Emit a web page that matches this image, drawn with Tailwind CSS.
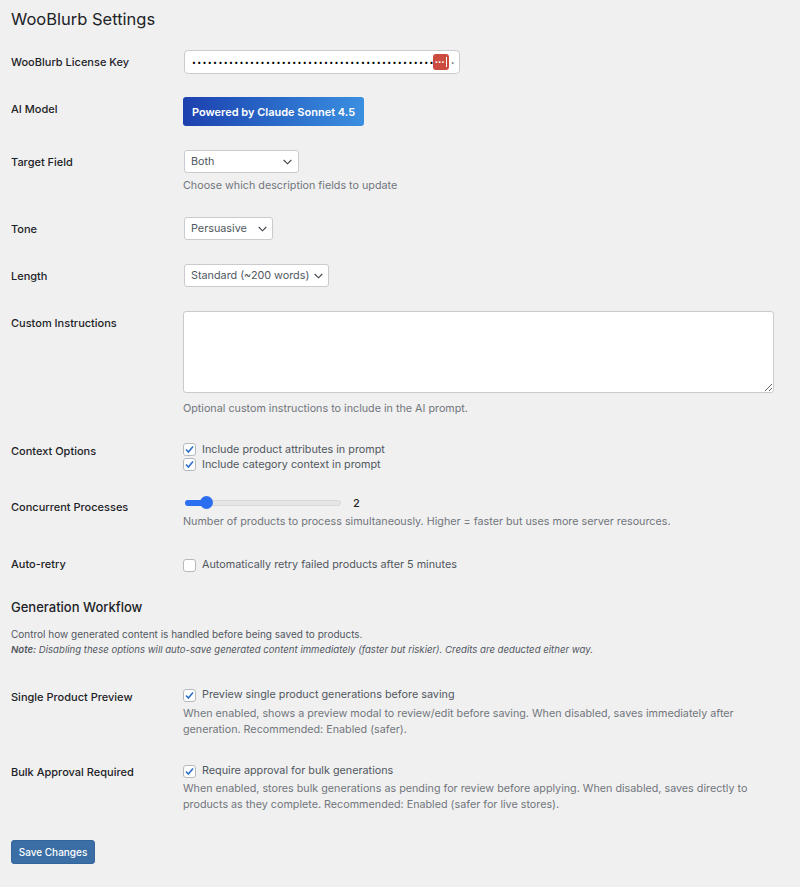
<!DOCTYPE html>
<html lang="en">
<head>
  <meta charset="UTF-8">
  <title>WooBlurb Settings</title>
  <script src="https://cdn.jsdelivr.net/npm/@tailwindcss/browser@4"></script>
</head>
<body class="bg-[#f0f0f1] font-['Inter',sans-serif] text-[#1d2327] overflow-hidden">
<div class="w-[800px] h-[887px] pl-[11px] pr-[26px] antialiased">

  <h1 class="pt-[8px] h-[50px] text-[16.5px] leading-[22px] font-normal text-[#1d2327]">WooBlurb Settings</h1>

  <!-- license -->
  <div class="flex h-[47px]">
    <label class="w-[172px] pt-[5px] text-[11px] leading-[14px] font-medium">WooBlurb License Key</label>
    <div class="relative w-[276px] h-[24px] ml-px bg-white border border-[#c9cbce] rounded-[4px] flex items-center pl-[7px]">
      <span class="text-[7px] leading-none tracking-[1.34px] text-black whitespace-nowrap">••••••••••••••••••••••••••••••••••••••••••••••</span>
      <span class="absolute left-[248px] top-[3px] w-[16px] h-[16px] rounded-[3px] bg-[#cc4b3f] text-white text-[6px] leading-[16px] font-bold pl-[2px] tracking-[0.4px]">•••</span>
      <span class="absolute left-[261px] top-[6px] w-px h-[10px] bg-white"></span>
      <span class="absolute left-[266px] top-[5px] text-[6px] leading-[14px] text-[#666]">•</span>
    </div>
  </div>

  <!-- model -->
  <div class="flex h-[53px]">
    <label class="w-[172px] pt-[5px] text-[11px] leading-[14px] font-medium">AI Model</label>
    <div class="w-[181px] h-[29px] bg-linear-to-r from-[#1e40af] to-[#3b8fe0] rounded-[3px] text-white text-[11px] leading-[30px] font-semibold text-center">Powered by Claude Sonnet 4.5</div>
  </div>

  <!-- target -->
  <div class="flex h-[67px]">
    <label class="w-[172px] pt-[5px] text-[11px] leading-[14px] font-medium">Target Field</label>
    <div class="ml-px">
      <div class="w-[115px] h-[23px] bg-white border border-[#c9cbce] rounded-[3px] flex items-center justify-between pt-px pl-[6px] pr-[6px] text-[10.8px] text-[#50575e]">
        <span>Both</span>
        <svg width="9" height="6" viewBox="0 0 9 6" fill="none" stroke="#3c434a" stroke-width="1.1"><path d="M0.7 1l3.8 3.8L8.3 1"/></svg>
      </div>
      <p class="mt-[6px] -ml-px text-[10.75px] leading-[14px] text-[#71767b]">Choose which description fields to update</p>
    </div>
  </div>

  <!-- tone -->
  <div class="flex h-[47px]">
    <label class="w-[172px] pt-[5px] text-[11px] leading-[14px] font-medium">Tone</label>
    <div class="ml-px w-[89px] h-[23px] bg-white border border-[#c9cbce] rounded-[3px] flex items-center justify-between pt-px pl-[6px] pr-[5px] text-[10.8px] text-[#50575e]">
      <span>Persuasive</span>
      <svg width="9" height="6" viewBox="0 0 9 6" fill="none" stroke="#3c434a" stroke-width="1.1"><path d="M0.7 1l3.8 3.8L8.3 1"/></svg>
    </div>
  </div>

  <!-- length -->
  <div class="flex h-[47px]">
    <label class="w-[172px] pt-[5px] text-[11px] leading-[14px] font-medium">Length</label>
    <div class="ml-px w-[145px] h-[23px] bg-white border border-[#c9cbce] rounded-[3px] flex items-center justify-between pt-px pl-[6px] pr-[5px] text-[10.8px] text-[#50575e]">
      <span class="whitespace-nowrap">Standard (~200 words)</span>
      <svg width="9" height="6" viewBox="0 0 9 6" fill="none" stroke="#3c434a" stroke-width="1.1"><path d="M0.7 1l3.8 3.8L8.3 1"/></svg>
    </div>
  </div>

  <!-- custom -->
  <div class="flex h-[127px]">
    <label class="w-[172px] pt-[5px] text-[11px] leading-[14px] font-medium">Custom Instructions</label>
    <div>
      <textarea class="block w-[591px] h-[82px] bg-white border border-[#c9cbce] rounded-[3px]"></textarea>
      <p class="mt-[9px] text-[10.75px] leading-[14px] text-[#71767b]">Optional custom instructions to include in the AI prompt.</p>
    </div>
  </div>

  <!-- context -->
  <div class="flex h-[54px]">
    <label class="w-[172px] pt-[6px] text-[11px] leading-[14px] font-medium">Context Options</label>
    <div class="pt-[4px] text-[10.8px] leading-[15px] text-[#50575e]">
      <div class="flex items-center h-[15px]">
        <span class="w-[13px] h-[13px] bg-white border border-[#b4b9be] rounded-[3px] flex items-center justify-center mr-[6px]"><svg width="11" height="11" viewBox="0 0 11 11" fill="none" stroke="#2f6fc9" stroke-width="1.6"><path d="M2 5.5l2.4 2.6L9 2.5"/></svg></span>
        Include product attributes in prompt
      </div>
      <div class="flex items-center h-[15px]">
        <span class="w-[13px] h-[13px] bg-white border border-[#b4b9be] rounded-[3px] flex items-center justify-center mr-[6px]"><svg width="11" height="11" viewBox="0 0 11 11" fill="none" stroke="#2f6fc9" stroke-width="1.6"><path d="M2 5.5l2.4 2.6L9 2.5"/></svg></span>
        Include category context in prompt
      </div>
    </div>
  </div>

  <!-- concurrent -->
  <div class="flex h-[65px]">
    <label class="w-[172px] pt-[8px] text-[11px] leading-[14px] font-medium">Concurrent Processes</label>
    <div class="pt-[4px]">
      <div class="flex items-center h-[14px]">
        <div class="relative ml-[2px] w-[156px] h-[6px] bg-[#e6e6e7] border border-[#d8d8da] rounded-full">
          <div class="absolute -left-px -top-px w-[20px] h-[6px] bg-[#2b6ff0] rounded-full"></div>
          <div class="absolute left-[14px] top-[-5px] w-[13px] h-[13px] bg-[#2b6ff0] rounded-full"></div>
        </div>
        <span class="ml-[12px] text-[11px] font-medium text-[#1d2327]">2</span>
      </div>
      <p class="mt-[5px] text-[10.75px] leading-[14px] text-[#71767b] whitespace-nowrap">Number of products to process simultaneously. Higher = faster but uses more server resources.</p>
    </div>
  </div>

  <!-- retry -->
  <div class="flex h-[41px]">
    <label class="w-[172px] text-[11px] leading-[14px] font-medium">Auto-retry</label>
    <div class="flex items-center h-[15px] pt-px text-[10.8px] text-[#50575e]">
      <span class="w-[13px] h-[13px] bg-white border border-[#b4b9be] rounded-[3px] mr-[6px]"></span>
      Automatically retry failed products after 5 minutes
    </div>
  </div>

  <h2 class="text-[13px] leading-[18px] font-medium h-[29px] text-[#1d2327]">Generation Workflow</h2>
  <p class="text-[10px] leading-[15px] text-[#50575e]">Control how generated content is handled before being saved to products.</p>
  <p class="text-[9.6px] leading-[15px] italic text-[#50575e]"><strong class="font-semibold">Note:</strong> Disabling these options will auto-save generated content immediately (faster but riskier). Credits are deducted either way.</p>

  <!-- single -->
  <div class="flex h-[76px] mt-[30px]">
    <label class="w-[172px] pt-[3px] text-[11px] leading-[14px] font-medium">Single Product Preview</label>
    <div>
      <div class="flex items-center h-[15px] pt-px text-[10.8px] text-[#50575e]">
        <span class="w-[13px] h-[13px] bg-white border border-[#b4b9be] rounded-[3px] flex items-center justify-center mr-[6px]"><svg width="11" height="11" viewBox="0 0 11 11" fill="none" stroke="#2f6fc9" stroke-width="1.6"><path d="M2 5.5l2.4 2.6L9 2.5"/></svg></span>
        Preview single product generations before saving
      </div>
      <p class="mt-[4px] w-[591px] text-[10.75px] leading-[16px] text-[#71767b]">When enabled, shows a preview modal to review/edit before saving. When disabled, saves immediately after generation. Recommended: Enabled (safer).</p>
    </div>
  </div>

  <!-- bulk -->
  <div class="flex h-[74px]">
    <label class="w-[172px] pt-[2px] text-[11px] leading-[14px] font-medium">Bulk Approval Required</label>
    <div>
      <div class="flex items-center h-[15px] pt-px text-[10.8px] text-[#50575e]">
        <span class="w-[13px] h-[13px] bg-white border border-[#b4b9be] rounded-[3px] flex items-center justify-center mr-[6px]"><svg width="11" height="11" viewBox="0 0 11 11" fill="none" stroke="#2f6fc9" stroke-width="1.6"><path d="M2 5.5l2.4 2.6L9 2.5"/></svg></span>
        Require approval for bulk generations
      </div>
      <p class="mt-[3px] w-[591px] text-[10.75px] leading-[16px] text-[#71767b]">When enabled, stores bulk generations as pending for review before applying. When disabled, saves directly to products as they complete. Recommended: Enabled (safer for live stores).</p>
    </div>
  </div>

  <button class="block mt-[3px] w-[84px] h-[24px] pt-px bg-[#3a6ea5] border border-[#33669c] rounded-[3px] text-white text-[10px] font-medium">Save Changes</button>
</div>
</body>
</html>
